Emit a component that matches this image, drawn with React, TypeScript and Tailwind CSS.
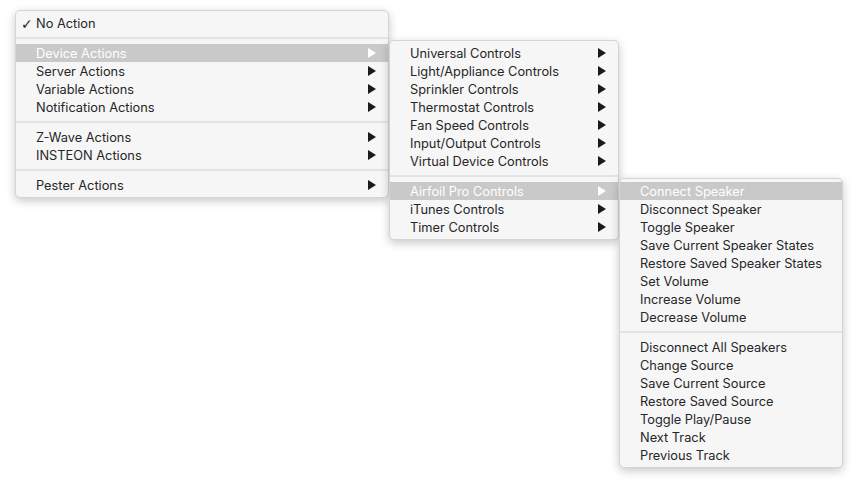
import React from "react";

type Item = { label: string; sub?: boolean; active?: boolean; checked?: boolean } | "sep";

const mainMenu: Item[] = [
  { label: "No Action", checked: true },
  "sep",
  { label: "Device Actions", sub: true, active: true },
  { label: "Server Actions", sub: true },
  { label: "Variable Actions", sub: true },
  { label: "Notification Actions", sub: true },
  "sep",
  { label: "Z-Wave Actions", sub: true },
  { label: "INSTEON Actions", sub: true },
  "sep",
  { label: "Pester Actions", sub: true },
];

const deviceMenu: Item[] = [
  { label: "Universal Controls", sub: true },
  { label: "Light/Appliance Controls", sub: true },
  { label: "Sprinkler Controls", sub: true },
  { label: "Thermostat Controls", sub: true },
  { label: "Fan Speed Controls", sub: true },
  { label: "Input/Output Controls", sub: true },
  { label: "Virtual Device Controls", sub: true },
  "sep",
  { label: "Airfoil Pro Controls", sub: true, active: true },
  { label: "iTunes Controls", sub: true },
  { label: "Timer Controls", sub: true },
];

const airfoilMenu: Item[] = [
  { label: "Connect Speaker", active: true },
  { label: "Disconnect Speaker" },
  { label: "Toggle Speaker" },
  { label: "Save Current Speaker States" },
  { label: "Restore Saved Speaker States" },
  { label: "Set Volume" },
  { label: "Increase Volume" },
  { label: "Decrease Volume" },
  "sep",
  { label: "Disconnect All Speakers" },
  { label: "Change Source" },
  { label: "Save Current Source" },
  { label: "Restore Saved Source" },
  { label: "Toggle Play/Pause" },
  { label: "Next Track" },
  { label: "Previous Track" },
];

function Arrow({ white }: { white?: boolean }) {
  return (
    <svg width="8" height="10" viewBox="0 0 8 10" className="shrink-0">
      <path d="M0 0 L8 5 L0 10 Z" fill={white ? "#ffffff" : "#1a1a1a"} />
    </svg>
  );
}

function Menu({ items, className }: { items: Item[]; className: string }) {
  return (
    <div
      className={
        "absolute rounded-[5px] bg-[#f6f6f6] border border-[#d4d4d4] py-[3px] shadow-[0_3px_10px_rgba(0,0,0,0.22)] " +
        className
      }
    >
      {items.map((item, i) =>
        item === "sep" ? (
          <div key={i} className="h-[12px] flex items-center">
            <div className="h-[2px] w-full bg-[#e3e3e3]" />
          </div>
        ) : (
          <div
            key={i}
            className={
              "h-[18px] flex items-center pl-[20px] pr-[12px] " +
              (item.active ? "bg-[#c9c9c9] text-white" : "text-[#262626]")
            }
          >
            <span className="relative flex-1 leading-none pt-[2px]">
              {item.checked && (
                <span className="absolute left-[-15px] top-[1px] text-[14px] font-['DejaVu_Sans']">✓</span>
              )}
              {item.label}
            </span>
            {item.sub && <Arrow white={item.active} />}
          </div>
        )
      )}
    </div>
  );
}

export default function App() {
  return (
    <div
      className="relative w-[857px] h-[487px] bg-white overflow-hidden text-[12.8px]"
      style={{ fontFamily: "Inter, 'Liberation Sans', Arial, sans-serif" }}
    >
      <Menu items={mainMenu} className="left-[15px] top-[10px] w-[374px]" />
      <Menu items={deviceMenu} className="left-[389px] top-[40px] w-[230px]" />
      <Menu items={airfoilMenu} className="left-[619px] top-[178px] w-[224px]" />
    </div>
  );
}
